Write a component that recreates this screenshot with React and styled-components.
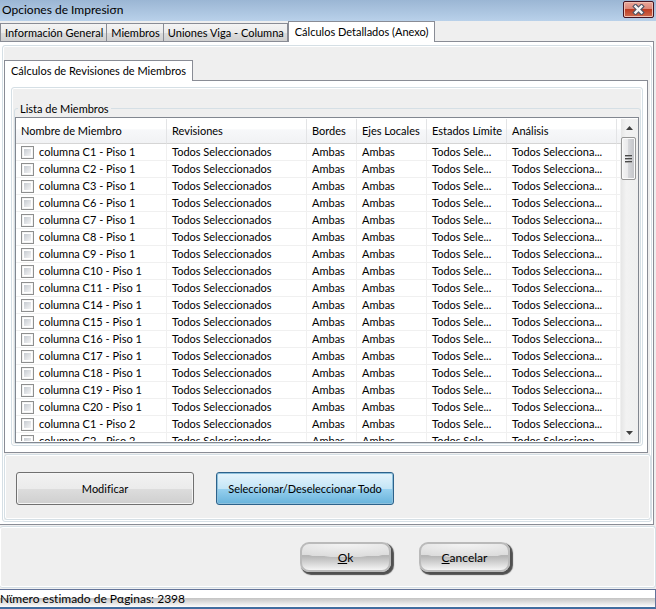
import {useState} from "react";
import styled, {createGlobalStyle} from "styled-components";

const GlobalStyle = createGlobalStyle`
  * {
    box-sizing: border-box;
  }

  body {
    margin: 0;
    background-color: #efefef;
    color: #000;
    font-family: Lato, "Open Sans", sans-serif;
    font-size: 11px;
    line-height: 15px;
    font-variant-ligatures: none;
  }

  button {
    margin: 0;
    padding: 0;
    font: inherit;
    font-variant-ligatures: none;
    color: inherit;
  }
`

const Dialog = styled.div`
  display: flex;
  flex-direction: column;
  min-height: 100vh;
  background-color: #efefef;
`

const TitleBar = styled.header`
  display: flex;
  justify-content: space-between;
  align-items: flex-start;
  height: 21px;
  padding: 1px 2px 0 2px;
  background: linear-gradient(#9bb6d4, #b9d1ea);
`

const Title = styled.h1`
  margin: 0;
  font-size: 12px;
  font-weight: normal;
  line-height: 18px;
`

const CloseButton = styled.button`
  display: flex;
  justify-content: center;
  align-items: center;
  width: 31px;
  height: 17px;
  border: 1px solid #431422;
  border-radius: 2px;
  background: linear-gradient(#e9a79a, #dc8778 45%, #bd3d24 50%, #cf6a4d);
  box-shadow: inset 0 0 0 1px #f0bfb2;
`

const TabList = styled.div`
  display: flex;
  align-items: flex-end;
`

const Tab = styled.button`
  position: relative;
  height: ${props => props.$active ? 21 : 18}px;
  margin-bottom: ${props => props.$active ? -1 : 0}px;
  padding: ${props => props.$active ? "0 6px 2px" : "0 3px 0 4px"};
  border: 1px solid #898c95;
  border-left-width: ${props => props.$joined ? 0 : 1}px;
  border-bottom: 0;
  background: ${props => props.$active ? "#fff" : "linear-gradient(#f4f4f4, #ebebeb 50%, #dddddd 50%, #d0d0d0)"};
  white-space: nowrap;
`

const MainPage = styled.div`
  margin-right: 2px;
  padding: 3px 1px 2px 2px;
  border: 1px solid #898c95;
  border-left: 0;
  background-color: #fff;
`

const Frame = styled.div`
  border: 1px solid #d5dfe5;
  border-radius: 3px;
  background-color: #efefef;
  box-shadow: inset 0 0 0 1px #fff;
`

const MainFrame = styled(Frame)`
  padding: 14px 0 1px 1px;
`

const MemberPage = styled.div`
  margin-right: 3px;
  padding: 6px 4px 6px 6px;
  border: 1px solid #898c95;
  background-color: #fff;
`

const MemberFrame = styled(Frame)`
  padding: 13px 1px 1px 2px;
`

const Group = styled.fieldset`
  min-width: 0;
  margin: 0;
  padding: 1px 1px 0 0;
  border: 1px solid #d5dfe5;
  border-radius: 3px;
`

const Legend = styled.legend`
  margin-left: 3px;
  padding: 0 2px;
`

const ListView = styled.div`
  display: flex;
  height: 326px;
  padding: 1px 0 1px 0;
  border: 1px solid #828790;
  background-color: #fff;
`

const ListBody = styled.div`
  flex: 1;
  min-width: 0;
  overflow: hidden;
`

const MemberTable = styled.table`
  width: 100%;
  table-layout: fixed;
  border-collapse: separate;
  border-spacing: 0;
`

const HeadCell = styled.th`
  width: ${props => props.$width ? `${props.$width}px` : "auto"};
  height: 25px;
  padding: 0 0 1px 5px;
  border-right: ${props => props.$width ? "1px solid #e3e4e6" : "0"};
  border-bottom: 1px solid #d5d5d5;
  background: linear-gradient(#fff 40%, #f7f8fa 45%, #f1f2f4);
  font-weight: normal;
  text-align: left;
  white-space: nowrap;
`

const Cell = styled.td`
  height: 17px;
  padding: 0 0 0 5px;
  border-right: 1px solid #f0f0f0;
  border-bottom: 1px solid #f0f0f0;
  line-height: 16px;
  white-space: nowrap;
`

const MemberLabel = styled.label`
  display: flex;
  align-items: center;
  gap: 5px;
  height: 16px;
`

const CheckBox = styled.input`
  appearance: none;
  width: 13px;
  height: 13px;
  margin: 0;
  border: 1px solid #8e8f8f;
  background: linear-gradient(135deg, #c6cbd1, #f4f4f5) content-box;
  padding: 2px;
  box-shadow: inset 0 0 0 1px #f4f4f4;

  &:checked {
    background: #4b6a9b content-box;
  }
`

const ScrollBar = styled.div`
  display: flex;
  flex-direction: column;
  width: 17px;
  background: linear-gradient(90deg, #e6e6e6, #f2f2f2 30%, #efefef);
`

const ScrollArrow = styled.button`
  display: flex;
  justify-content: center;
  align-items: center;
  height: 17px;
  border: 0;
  background: none;
`

const ScrollThumb = styled.div`
  display: flex;
  justify-content: center;
  align-items: center;
  width: 15px;
  height: 43px;
  margin: 1px 0;
  border: 1px solid #979797;
  border-radius: 2px;
  background: linear-gradient(90deg, #f5f5f5, #e9e9eb 45%, #d5d6d9 50%, #c2c3c7);
  box-shadow: inset 0 0 0 1px #fafafa;
`

const ScrollTrack = styled.div`
  flex: 1;
`

const ActionFrame = styled(Frame)`
  display: flex;
  gap: 22px;
  margin-top: 1px;
  padding: 17px 11px 14px;
`

const ActionButton = styled.button`
  width: 178px;
  height: 33px;
  border: 1px solid ${props => props.$hot ? "#2c628b" : "#707070"};
  border-radius: 3px;
  background: ${props => props.$hot
    ? "linear-gradient(#e5f4fc, #c4e5f6 50%, #98d1ef 50%, #68b3db)"
    : "linear-gradient(#f2f2f2, #ebebeb 50%, #dddddd 50%, #cfcfcf)"};
  box-shadow: inset 0 0 0 1px ${props => props.$hot ? "#8ec0dc" : "#f5f5f5"};
`

const Footer = styled(Frame)`
  display: flex;
  flex: 1;
  justify-content: flex-start;
  align-items: flex-start;
  gap: 28px;
  margin-top: 1px;
  padding: 15px 0 12px 300px;
  border-left: 0;
`

const GlossyButton = styled.button`
  width: 91px;
  height: 30px;
  border: 2px solid #bababa;
  border-radius: 9px;
  background: radial-gradient(ellipse 90% 50% at 50% 0, #f4f4f4 0, #dcdcdc 98%, transparent 100%), linear-gradient(#e6e6e6 25%, #b4b4b4 45%, #f4f4f4);
  box-shadow: 2px 2px 1px 1px #505050;
  font-size: 12px;

  &::first-letter {
    text-decoration: underline;
  }
`

const StatusBar = styled.footer`
  height: 20px;
  margin-top: 1px;
  border: 1px solid #63749a;
  border-left: 0;
  border-bottom: 2px solid #416d9f;
  background: linear-gradient(#fff 8px, #c3c3c3 8px, #fdfdfd);
  font-size: 12px;
  line-height: 18px;
`

const mainTabs = ["Información General", "Miembros", "Uniones Viga - Columna", "Cálculos Detallados (Anexo)"]

const columns = [
    {name: "Nombre de Miembro", width: 151},
    {name: "Revisiones", width: 140},
    {name: "Bordes", width: 50},
    {name: "Ejes Locales", width: 70},
    {name: "Estados Límite", width: 80},
    {name: "Análisis", width: 110},
    {name: "", width: 0},
]

const members = [
    "C1 - Piso 1", "C2 - Piso 1", "C3 - Piso 1", "C6 - Piso 1", "C7 - Piso 1", "C8 - Piso 1",
    "C9 - Piso 1", "C10 - Piso 1", "C11 - Piso 1", "C14 - Piso 1", "C15 - Piso 1", "C16 - Piso 1",
    "C17 - Piso 1", "C18 - Piso 1", "C19 - Piso 1", "C20 - Piso 1", "C1 - Piso 2", "C2 - Piso 2",
]

function MemberRow({name, checked, onToggle}) {
    return (
        <tr>
            <Cell>
                <MemberLabel>
                    <CheckBox type="checkbox" checked={checked} onChange={onToggle}/>
                    columna {name}
                </MemberLabel>
            </Cell>
            <Cell>Todos Seleccionados</Cell>
            <Cell>Ambas</Cell>
            <Cell>Ambas</Cell>
            <Cell>Todos Sele...</Cell>
            <Cell>Todos Selecciona...</Cell>
            <Cell/>
        </tr>
    )
}

export default function App() {
    const [tab, setTab] = useState(3)
    const [selected, setSelected] = useState([])

    const toggle = name => setSelected(
        selected.includes(name) ? selected.filter(item => item !== name) : [...selected, name]
    )
    const toggleAll = () => setSelected(selected.length ? [] : members)

    return (
        <Dialog>
            <GlobalStyle/>
            <TitleBar>
                <Title>Opciones de Impresiσn</Title>
                <CloseButton aria-label="Cerrar">
                    <svg width="13" height="11" viewBox="0 0 13 11">
                        <path d="M3.5 2.5 L9.5 8.5 M9.5 2.5 L3.5 8.5" stroke="#535666" strokeWidth="4.6" strokeLinecap="square"/>
                        <path d="M3.5 2.5 L9.5 8.5 M9.5 2.5 L3.5 8.5" stroke="#f7f7f7" strokeWidth="2.4" strokeLinecap="square"/>
                    </svg>
                </CloseButton>
            </TitleBar>

            <TabList role="tablist">
                {mainTabs.map((name, index) => (
                    <Tab
                        key={name}
                        role="tab"
                        aria-selected={tab === index}
                        $active={tab === index}
                        $joined={index === 1 || index === 2}
                        onClick={() => setTab(index)}
                    >
                        {name}
                    </Tab>
                ))}
            </TabList>

            <MainPage>
                <MainFrame>
                    <TabList role="tablist">
                        <Tab role="tab" aria-selected $active>Cálculos de Revisiones de Miembros</Tab>
                    </TabList>
                    <MemberPage>
                        <MemberFrame>
                            <Group>
                                <Legend>Lista de Miembros</Legend>
                                <ListView>
                                    <ListBody>
                                        <MemberTable>
                                            <thead>
                                                <tr>
                                                    {columns.map(column => (
                                                        <HeadCell key={column.name} $width={column.width}>{column.name}</HeadCell>
                                                    ))}
                                                </tr>
                                            </thead>
                                            <tbody>
                                                {members.map(name => (
                                                    <MemberRow
                                                        key={name}
                                                        name={name}
                                                        checked={selected.includes(name)}
                                                        onToggle={() => toggle(name)}
                                                    />
                                                ))}
                                            </tbody>
                                        </MemberTable>
                                    </ListBody>
                                    <ScrollBar>
                                        <ScrollArrow aria-label="Subir">
                                            <svg width="7" height="4" viewBox="0 0 7 4">
                                                <path d="M0 4 L3.5 0 L7 4 Z" fill="#404040"/>
                                            </svg>
                                        </ScrollArrow>
                                        <ScrollThumb>
                                            <svg width="7" height="8" viewBox="0 0 7 8">
                                                <path d="M0 0.5 H7 M0 3.5 H7 M0 6.5 H7" stroke="#4a4a4a"/>
                                                <path d="M0 1.5 H7 M0 4.5 H7 M0 7.5 H7" stroke="#a8a8a8"/>
                                            </svg>
                                        </ScrollThumb>
                                        <ScrollTrack/>
                                        <ScrollArrow aria-label="Bajar">
                                            <svg width="7" height="4" viewBox="0 0 7 4">
                                                <path d="M0 0 L3.5 4 L7 0 Z" fill="#404040"/>
                                            </svg>
                                        </ScrollArrow>
                                    </ScrollBar>
                                </ListView>
                            </Group>
                        </MemberFrame>
                    </MemberPage>
                    <ActionFrame>
                        <ActionButton>Modificar</ActionButton>
                        <ActionButton $hot onClick={toggleAll}>Seleccionar/Deseleccionar Todo</ActionButton>
                    </ActionFrame>
                </MainFrame>
            </MainPage>

            <Footer>
                <GlossyButton>Ok</GlossyButton>
                <GlossyButton>Cancelar</GlossyButton>
            </Footer>
            <StatusBar>Nϊmero estimado de Pαginas: 2398</StatusBar>
        </Dialog>
    )
}
